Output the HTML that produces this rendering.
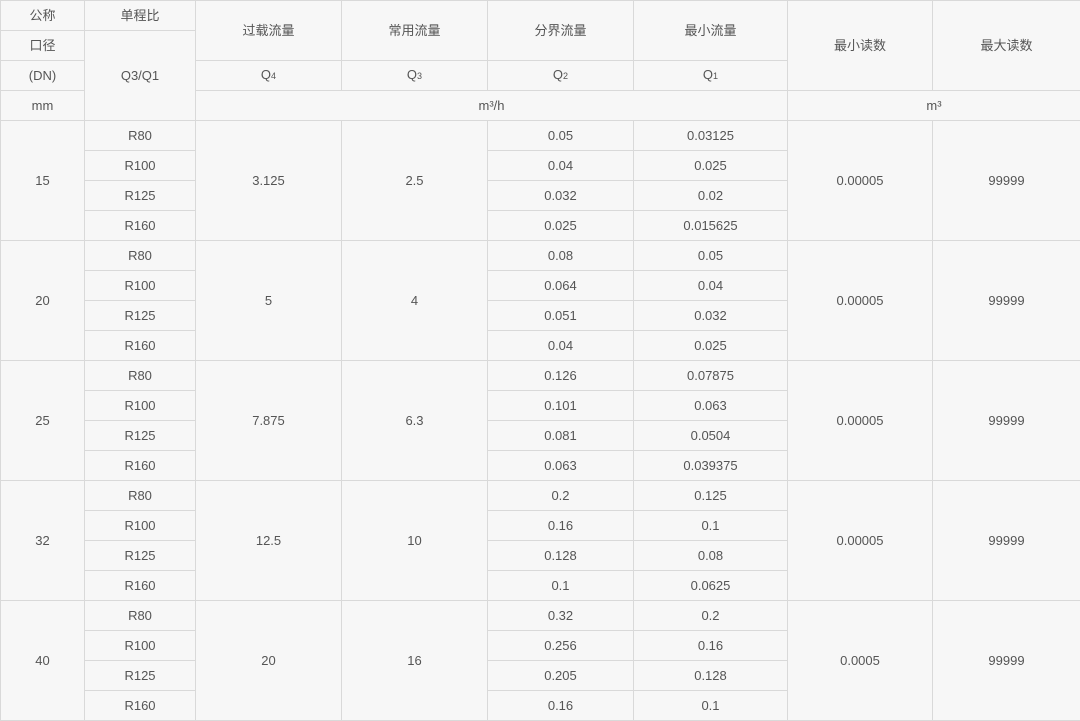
<!DOCTYPE html>
<html><head><meta charset="utf-8"><style>
html,body{margin:0;padding:0;background:#f7f7f7;}
table{border-collapse:collapse;table-layout:fixed;width:1080px;font-family:"Liberation Sans","Noto Sans CJK SC",sans-serif;font-size:13px;color:#555;background:#f7f7f7;}
td{border:1px solid #d9d9d9;height:29px;padding:0;text-align:center;vertical-align:middle;line-height:16px;}
sub{font-size:9px;vertical-align:baseline;}
</style></head><body>
<table>
<colgroup><col style="width:84px"><col style="width:111px"><col style="width:146px"><col style="width:146px"><col style="width:146px"><col style="width:154px"><col style="width:145px"><col style="width:148px"></colgroup>
<tr><td>公称</td><td>单程比</td><td rowspan="2">过载流量</td><td rowspan="2">常用流量</td><td rowspan="2">分界流量</td><td rowspan="2">最小流量</td><td rowspan="3">最小读数</td><td rowspan="3">最大读数</td></tr>
<tr><td>口径</td><td rowspan="3">Q3/Q1</td></tr>
<tr><td>(DN)</td><td>Q<sub>4</sub></td><td>Q<sub>3</sub></td><td>Q<sub>2</sub></td><td>Q<sub>1</sub></td></tr>
<tr><td>mm</td><td colspan="4">m³/h</td><td colspan="2">m³</td></tr>

<tr><td rowspan="4">15</td><td>R80</td><td rowspan="4">3.125</td><td rowspan="4">2.5</td><td>0.05</td><td>0.03125</td><td rowspan="4">0.00005</td><td rowspan="4">99999</td></tr>
<tr><td>R100</td><td>0.04</td><td>0.025</td></tr>
<tr><td>R125</td><td>0.032</td><td>0.02</td></tr>
<tr><td>R160</td><td>0.025</td><td>0.015625</td></tr>

<tr><td rowspan="4">20</td><td>R80</td><td rowspan="4">5</td><td rowspan="4">4</td><td>0.08</td><td>0.05</td><td rowspan="4">0.00005</td><td rowspan="4">99999</td></tr>
<tr><td>R100</td><td>0.064</td><td>0.04</td></tr>
<tr><td>R125</td><td>0.051</td><td>0.032</td></tr>
<tr><td>R160</td><td>0.04</td><td>0.025</td></tr>

<tr><td rowspan="4">25</td><td>R80</td><td rowspan="4">7.875</td><td rowspan="4">6.3</td><td>0.126</td><td>0.07875</td><td rowspan="4">0.00005</td><td rowspan="4">99999</td></tr>
<tr><td>R100</td><td>0.101</td><td>0.063</td></tr>
<tr><td>R125</td><td>0.081</td><td>0.0504</td></tr>
<tr><td>R160</td><td>0.063</td><td>0.039375</td></tr>

<tr><td rowspan="4">32</td><td>R80</td><td rowspan="4">12.5</td><td rowspan="4">10</td><td>0.2</td><td>0.125</td><td rowspan="4">0.00005</td><td rowspan="4">99999</td></tr>
<tr><td>R100</td><td>0.16</td><td>0.1</td></tr>
<tr><td>R125</td><td>0.128</td><td>0.08</td></tr>
<tr><td>R160</td><td>0.1</td><td>0.0625</td></tr>

<tr><td rowspan="4">40</td><td>R80</td><td rowspan="4">20</td><td rowspan="4">16</td><td>0.32</td><td>0.2</td><td rowspan="4">0.0005</td><td rowspan="4">99999</td></tr>
<tr><td>R100</td><td>0.256</td><td>0.16</td></tr>
<tr><td>R125</td><td>0.205</td><td>0.128</td></tr>
<tr><td>R160</td><td>0.16</td><td>0.1</td></tr>
</table>
</body></html>
